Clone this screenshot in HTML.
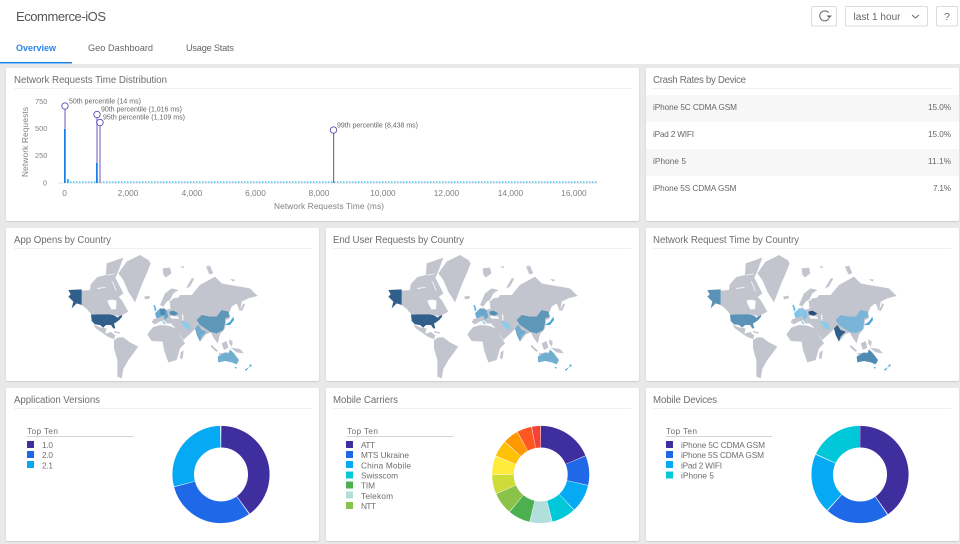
<!DOCTYPE html>
<html><head><meta charset="utf-8"><title>Ecommerce-iOS</title>
<style>
html,body{margin:0;padding:0;background:#e9e9e9;width:960px;height:544px;overflow:hidden}
svg{display:block}
text{font-family:"Liberation Sans",sans-serif;fill:#6a6a6a}
.t{font-size:9.7px;fill:#6e6e6e}
.s{font-size:8.2px;fill:#666}
.a{font-size:8.3px;fill:#808080}
.y{font-size:7.4px;fill:#808080}
.p{font-size:7px;fill:#666}
.l{font-size:8.3px;fill:#6e6e6e}
.card{fill:#fff;filter:url(#sh)}
.d{fill:none;stroke-width:21.6}
</style></head><body>
<svg width="960" height="544" viewBox="0 0 960 544" xmlns="http://www.w3.org/2000/svg">
<defs>
<filter id="sh" x="-2%" y="-2%" width="104%" height="106%"><feDropShadow dx="0" dy="0.7" stdDeviation="0.7" flood-color="#000" flood-opacity=".16"/></filter>
<symbol id="map" viewBox="0 0 780 420" width="260" height="140" overflow="visible">
<g fill="#c2c4ce">
<path d="M125,137L150,135L152,118L172,96L198,90L200,55L250,38L236,76L226,98L250,145L236,156L245,165L265,200L250,208L240,215L225,210L153,207L140,192L125,180Z"/>
<path d="M235,85L260,50L300,30L325,45L332,55L320,85L305,120L285,172L265,140L250,105Z"/>
<path d="M160,238L180,247L200,250L196,266L214,261L226,272L222,282L205,276L185,262L168,250Z"/>
<path d="M222,285L235,277L250,277L270,292L295,305L280,325L265,345L250,372L245,400L232,395L232,345L222,310Z"/>
<path d="M338,247L360,240L385,242L408,250L420,272L435,295L420,310L410,345L385,352L372,315L368,290L335,288L322,268Z"/>
<path d="M335,232L340,222L350,220L345,205L360,190L372,188L378,195L392,190L388,170L395,165L400,160L415,158L420,150L455,150L480,120L525,95L545,115L570,120L630,130L653,153L625,160L605,170L600,200L590,175L575,185L565,210L570,220L558,225L555,250L540,268L533,295L522,280L512,262L498,268L480,290L465,252L455,262L430,285L405,248L392,235L380,235L370,225L355,232L345,238Z"/>
<path d="M360,180L375,145L395,130L415,135L400,145L390,165L380,170L370,185Z"/>
<path d="M368,70L390,68L394,85L378,97L370,90Z"/><path d="M312,155L328,152L330,160L316,163Z"/>
<path d="M438,130L455,100L463,100L450,125Z"/><path d="M498,65L510,62L520,85L508,88Z"/>
<path d="M600,195L610,175L615,178L606,198Z"/><path d="M422,322L431,316L428,340L420,342Z"/>
<path d="M515,300L535,318L528,320L512,305Z"/><path d="M535,325L565,322L568,328L538,330Z"/>
<path d="M545,295L560,288L565,308L552,315Z"/><path d="M568,282L578,290L576,305L568,296Z"/>
<path d="M572,308L600,312L612,325L590,322Z"/><path d="M222,258L240,262L238,266L222,262Z"/>
<path d="M570,102L585,104L580,110Z"/><path d="M420,65L432,64L430,70Z"/>
</g>
<g fill="#fff">
<path d="M202,167L216,164L230,167L228,192L215,194L207,180Z"/>
<path d="M172,129L196,126L197,128L173,132Z"/>
<path d="M200,90L224,85L224,87L201,92Z"/>
<path d="M216,110L218,109L230,138L228,139Z"/>
<path d="M388,213L413,214L418,221L396,221Z"/><path d="M426,209L430,209L430,227L427,227Z"/>
<path d="M385,178L390,171L389,187L386,189Z"/>
</g>
<path fill="var(--usa)" d="M85,135L125,133L125,180L110,175L95,190L100,170L85,155L92,148Z"/>
<path fill="var(--usa)" d="M153,208L210,208L225,212L232,218L245,210L247,214L238,225L228,232L222,236L226,250L220,250L213,240L198,240L190,248L180,240L165,238L155,228Z"/>
<path fill="var(--cn)" d="M470,225L485,210L510,215L530,215L545,195L565,200L570,215L555,220L555,235L550,255L530,265L510,260L480,240Z"/>
<path fill="var(--ua)" d="M388,200L400,197L415,205L405,212L390,208Z"/>
<path fill="var(--in)" d="M465,250L475,240L485,255L500,260L485,275L480,290L470,270Z"/>
<path fill="var(--ir)" d="M422,228L435,230L450,238L452,255L435,250Z"/>
<path fill="var(--au)" d="M533,335L555,322L565,325L570,313L582,325L597,345L590,358L575,352L555,348L535,352Z"/>
<path fill="var(--nz)" d="M630,357L636,362L626,368L618,378L615,373L628,366Z"/><path fill="var(--nz)" d="M584,366L590,366L588,372Z"/>
<path fill="var(--nz)" d="M555,240L570,230L580,215L582,225L570,240Z"/>
<path fill="var(--eu)" d="M345,205L360,190L380,195L385,215L375,225L370,212L350,220Z"/>
<path fill="var(--de)" d="M360,193L375,192L376,208L362,210Z"/>
<path fill="var(--sw)" d="M340,180L345,180L350,195L345,200Z"/>
<path fill="var(--sw)" d="M364,222L372,232L378,238L370,236Z"/>
</symbol>
</defs>

<rect x="0" y="0" width="960" height="64" fill="#fff"/>
<rect x="0" y="62" width="72" height="1.5" fill="#1a7fe8"/>
<text x="16" y="21" textLength="90" lengthAdjust="spacing" style="font-size:13px;fill:#555">Ecommerce-iOS</text>
<text x="16" y="51" textLength="40" lengthAdjust="spacing" style="font-size:9px;font-weight:bold;fill:#2a86e8">Overview</text>
<text x="88" y="51" textLength="65" lengthAdjust="spacing" style="font-size:9.2px;fill:#666">Geo Dashboard</text>
<text x="186" y="51" textLength="48" lengthAdjust="spacing" style="font-size:9.2px;fill:#666">Usage Stats</text>

<g fill="#fff" stroke="#dcdcdc" stroke-width="1">
<rect x="811.5" y="6.5" width="25" height="19.5" rx="1"/>
<rect x="845.5" y="6.5" width="82" height="19.5" rx="1"/>
<rect x="936.5" y="6.5" width="21" height="19.5" rx="1"/>
</g>
<path d="M828.500,12.500A5,5 0 1 0 829,18.500" fill="none" stroke="#666" stroke-width="1"/>
<path d="M826.500,15.500L832,15.500L829.300,18.300Z" fill="#666"/>
<text x="853.5" y="20" textLength="47" lengthAdjust="spacing" style="font-size:10px;fill:#666">last 1 hour</text>
<path d="M912,15L915.500,18L919,15" fill="none" stroke="#666" stroke-width="1"/>
<text x="947" y="20" text-anchor="middle" style="font-size:10.5px;fill:#666">?</text>

<!-- cards -->
<rect class="card" x="6" y="68" width="633" height="153" rx="2"/>
<rect class="card" x="646" y="68" width="313" height="153" rx="2"/>
<rect class="card" x="6" y="228" width="313" height="153" rx="2"/>
<rect class="card" x="326" y="228" width="313" height="153" rx="2"/>
<rect class="card" x="646" y="228" width="313" height="153" rx="2"/>
<rect class="card" x="6" y="388" width="313" height="153" rx="2"/>
<rect class="card" x="326" y="388" width="313" height="153" rx="2"/>
<rect class="card" x="646" y="388" width="313" height="153" rx="2"/>

<g fill="#f0f0f0">
<rect x="14" y="88" width="618" height="1"/><rect x="653" y="88" width="298" height="1"/>
<rect x="14" y="248" width="298" height="1"/><rect x="333" y="248" width="298" height="1"/><rect x="653" y="248" width="298" height="1"/>
<rect x="14" y="408" width="298" height="1"/><rect x="333" y="408" width="298" height="1"/><rect x="653" y="408" width="298" height="1"/>
</g>
<text class="t" x="14" y="83" textLength="153" lengthAdjust="spacing">Network Requests Time Distribution</text>
<text class="t" x="653" y="83" textLength="93" lengthAdjust="spacing">Crash Rates by Device</text>
<text class="t" x="14" y="243" textLength="97" lengthAdjust="spacing">App Opens by Country</text>
<text class="t" x="333" y="243" textLength="131" lengthAdjust="spacing">End User Requests by Country</text>
<text class="t" x="653" y="243" textLength="146" lengthAdjust="spacing">Network Request Time by Country</text>
<text class="t" x="14" y="403" textLength="86" lengthAdjust="spacing">Application Versions</text>
<text class="t" x="333" y="403" textLength="65" lengthAdjust="spacing">Mobile Carriers</text>
<text class="t" x="653" y="403" textLength="64" lengthAdjust="spacing">Mobile Devices</text>

<!-- distribution chart -->
<text class="y" x="35" y="104">750</text><text class="y" x="35" y="131">500</text><text class="y" x="35" y="158">250</text><text class="y" x="47" y="185.500" text-anchor="end">0</text>
<text class="a" transform="translate(28,177) rotate(-90)" x="0" y="0" textLength="70" lengthAdjust="spacing">Network Requests</text>
<g text-anchor="middle">
<text class="a" x="64.5" y="196">0</text><text class="a" x="128" y="196">2,000</text><text class="a" x="192" y="196">4,000</text><text class="a" x="255.5" y="196">6,000</text><text class="a" x="319" y="196">8,000</text><text class="a" x="383" y="196">10,000</text><text class="a" x="446.5" y="196">12,000</text><text class="a" x="510.5" y="196">14,000</text><text class="a" x="574" y="196">16,000</text>
</g>
<text class="a" x="274" y="209" textLength="110" lengthAdjust="spacing">Network Requests Time (ms)</text>
<line x1="58" y1="183" x2="597" y2="183" stroke="#e3e3e3" stroke-width="1"/>
<line x1="70" y1="182.200" x2="597" y2="182.200" stroke="#6cc8f5" stroke-width="1.8" stroke-dasharray="1.500 1.500"/>
<rect x="67" y="179" width="1.800" height="4" fill="#29b6f6"/>
<g fill="#b6acdc">
<rect x="64" y="108" width="2" height="75"/><rect x="96" y="117" width="2" height="66"/><rect x="99" y="125" width="2" height="58"/>
</g>
<rect x="333" y="133" width="1.200" height="50" fill="#77778c"/>
<rect x="64" y="129" width="1.500" height="54" fill="#1a7fe8"/>
<rect x="96" y="163" width="1.500" height="20" fill="#1a7fe8"/>
<g fill="#fff" stroke="#5e4db2" stroke-width="0.9">
<circle cx="65" cy="106" r="3.200"/><circle cx="97" cy="114.500" r="3.200"/><circle cx="100" cy="122.500" r="3.200"/><circle cx="333.500" cy="130" r="3.200"/>
</g>
<text class="p" x="69" y="103.500" textLength="72" lengthAdjust="spacing">50th percentile (14 ms)</text>
<text class="p" x="101" y="111.500" textLength="81" lengthAdjust="spacing">90th percentile (1,016 ms)</text>
<text class="p" x="103" y="119.500" textLength="82" lengthAdjust="spacing">95th percentile (1,109 ms)</text>
<text class="p" x="337" y="127.500" textLength="81" lengthAdjust="spacing">99th percentile (8,438 ms)</text>

<!-- crash table -->
<rect x="646" y="95" width="313" height="27" fill="#f7f7f7"/>
<rect x="646" y="149" width="313" height="27" fill="#f7f7f7"/>
<text class="s" x="653" y="110" textLength="84" lengthAdjust="spacing">iPhone 5C CDMA GSM</text>
<text class="s" x="653" y="137" textLength="41" lengthAdjust="spacing">iPad 2 WIFI</text>
<text class="s" x="653" y="164" textLength="33" lengthAdjust="spacing">iPhone 5</text>
<text class="s" x="653" y="191" textLength="83.500" lengthAdjust="spacing">iPhone 5S CDMA GSM</text>
<text class="s" x="928" y="110" textLength="23" lengthAdjust="spacing">15.0%</text>
<text class="s" x="928" y="137" textLength="23" lengthAdjust="spacing">15.0%</text>
<text class="s" x="928" y="164" textLength="23" lengthAdjust="spacing">11.1%</text>
<text class="s" x="933" y="191" textLength="18" lengthAdjust="spacing">7.1%</text>

<!-- maps -->
<use href="#map" x="40" y="245" width="260" height="140" style="--usa:#2f5f8a;--cn:#5f97b8;--ua:#4f8fb8;--in:#70abcf;--ir:#8ccbea;--au:#72aed0;--nz:#46a6dc;--eu:#66a8d0;--de:#4f87ae;--sw:#6cbce8"/>
<use href="#map" x="360" y="245" width="260" height="140" style="--usa:#2f5f8a;--cn:#5f97b8;--ua:#4f8fb8;--in:#70abcf;--ir:#8ccbea;--au:#72aed0;--nz:#46a6dc;--eu:#68aad2;--de:#6ba4c8;--sw:#6cbce8"/>
<use href="#map" x="679" y="245" width="260" height="140" style="--usa:#5b93b8;--cn:#7ab5d8;--ua:#234f7a;--in:#2f5f8a;--ir:#8ccbea;--au:#4f8bb3;--nz:#46a6dc;--eu:#7cc4e8;--de:#86c8ea;--sw:#6cbce8"/>

<!-- legends -->
<g fill="#d4d4d4"><rect x="27" y="436" width="107" height="1"/><rect x="347" y="436" width="106" height="1"/><rect x="666" y="436" width="106" height="1"/></g>
<text class="l" x="27" y="434" textLength="31" lengthAdjust="spacing">Top Ten</text>
<text class="l" x="347" y="434" textLength="31" lengthAdjust="spacing">Top Ten</text>
<text class="l" x="666" y="434" textLength="31" lengthAdjust="spacing">Top Ten</text>

<rect x="27" y="441" width="7" height="7" fill="#3f2e9e"/><rect x="27" y="451" width="7" height="7" fill="#1f69e8"/><rect x="27" y="461" width="7" height="7" fill="#06a9f4"/>
<text class="l" x="42" y="448" textLength="11" lengthAdjust="spacing">1.0</text>
<text class="l" x="42" y="458" textLength="11" lengthAdjust="spacing">2.0</text>
<text class="l" x="42" y="468.500" textLength="11" lengthAdjust="spacing">2.1</text>

<rect x="346" y="441" width="7" height="7" fill="#3f2e9e"/><rect x="346" y="451" width="7" height="7" fill="#1f69e8"/><rect x="346" y="461" width="7" height="7" fill="#06a9f4"/><rect x="346" y="471.500" width="7" height="7" fill="#00c8d8"/><rect x="346" y="481.500" width="7" height="7" fill="#4caf50"/><rect x="346" y="491.500" width="7" height="7" fill="#b2dfdb"/><rect x="346" y="502" width="7" height="7" fill="#8bc34a"/>
<text class="l" x="361" y="448" textLength="14" lengthAdjust="spacing">ATT</text>
<text class="l" x="361" y="458" textLength="48" lengthAdjust="spacing">MTS Ukraine</text>
<text class="l" x="361" y="468.500" textLength="50" lengthAdjust="spacing">China Mobile</text>
<text class="l" x="361" y="478.500" textLength="37" lengthAdjust="spacing">Swisscom</text>
<text class="l" x="361" y="488.500" textLength="14" lengthAdjust="spacing">TIM</text>
<text class="l" x="361" y="499" textLength="32" lengthAdjust="spacing">Telekom</text>
<text class="l" x="361" y="509" textLength="15" lengthAdjust="spacing">NTT</text>

<rect x="666" y="441" width="7" height="7" fill="#3f2e9e"/><rect x="666" y="451" width="7" height="7" fill="#1f69e8"/><rect x="666" y="461" width="7" height="7" fill="#06a9f4"/><rect x="666" y="471.500" width="7" height="7" fill="#00c8d8"/>
<text class="l" x="681" y="448" textLength="84" lengthAdjust="spacing">iPhone 5C CDMA GSM</text>
<text class="l" x="681" y="458" textLength="83" lengthAdjust="spacing">iPhone 5S CDMA GSM</text>
<text class="l" x="681" y="468.500" textLength="41" lengthAdjust="spacing">iPad 2 WIFI</text>
<text class="l" x="681" y="478.500" textLength="33" lengthAdjust="spacing">iPhone 5</text>

<!-- donuts -->
<g transform="translate(221,474.500) rotate(-90)">
<circle class="d" r="37.800" pathLength="100" stroke="#3f2e9e" stroke-dasharray="39.800 200" stroke-dashoffset="-0.100"/>
<circle class="d" r="37.800" pathLength="100" stroke="#1f69e8" stroke-dasharray="30.600 200" stroke-dashoffset="-40.200"/>
<circle class="d" r="37.800" pathLength="100" stroke="#06a9f4" stroke-dasharray="28.700 200" stroke-dashoffset="-71"/>
</g>
<g transform="translate(860,474.500) rotate(-90)">
<circle class="d" r="37.800" pathLength="100" stroke="#3f2e9e" stroke-dasharray="40.100 200" stroke-dashoffset="-0.100"/>
<circle class="d" r="37.800" pathLength="100" stroke="#1f69e8" stroke-dasharray="21.100 200" stroke-dashoffset="-40.500"/>
<circle class="d" r="37.800" pathLength="100" stroke="#06a9f4" stroke-dasharray="19.800 200" stroke-dashoffset="-61.900"/>
<circle class="d" r="37.800" pathLength="100" stroke="#00c8d8" stroke-dasharray="18 200" stroke-dashoffset="-82"/>
</g>
<g transform="translate(540.700,474.500) rotate(-90)">
<circle class="d" r="37.800" pathLength="100" stroke="#3f2e9e" stroke-dasharray="18.500 200" stroke-dashoffset="-0.100"/>
<circle class="d" r="37.800" pathLength="100" stroke="#1f69e8" stroke-dasharray="9.700 200" stroke-dashoffset="-18.800"/>
<circle class="d" r="37.800" pathLength="100" stroke="#06a9f4" stroke-dasharray="9.200 200" stroke-dashoffset="-28.700"/>
<circle class="d" r="37.800" pathLength="100" stroke="#00c8d8" stroke-dasharray="8 200" stroke-dashoffset="-38.100"/>
<circle class="d" r="37.800" pathLength="100" stroke="#b2dfdb" stroke-dasharray="7.200 200" stroke-dashoffset="-46.300"/>
<circle class="d" r="37.800" pathLength="100" stroke="#4caf50" stroke-dasharray="7.300 200" stroke-dashoffset="-53.700"/>
<circle class="d" r="37.800" pathLength="100" stroke="#8bc34a" stroke-dasharray="7.200 200" stroke-dashoffset="-61.200"/>
<circle class="d" r="37.800" pathLength="100" stroke="#cddc39" stroke-dasharray="6.300 200" stroke-dashoffset="-68.600"/>
<circle class="d" r="37.800" pathLength="100" stroke="#ffeb3b" stroke-dasharray="6 200" stroke-dashoffset="-75.100"/>
<circle class="d" r="37.800" pathLength="100" stroke="#ffc107" stroke-dasharray="5.400 200" stroke-dashoffset="-81.300"/>
<circle class="d" r="37.800" pathLength="100" stroke="#ff9800" stroke-dasharray="5 200" stroke-dashoffset="-86.900"/>
<circle class="d" r="37.800" pathLength="100" stroke="#ff5722" stroke-dasharray="4.800 200" stroke-dashoffset="-92.100"/>
<circle class="d" r="37.800" pathLength="100" stroke="#f44336" stroke-dasharray="2.800 200" stroke-dashoffset="-97.100"/>
</g>
</svg>
</body></html>
